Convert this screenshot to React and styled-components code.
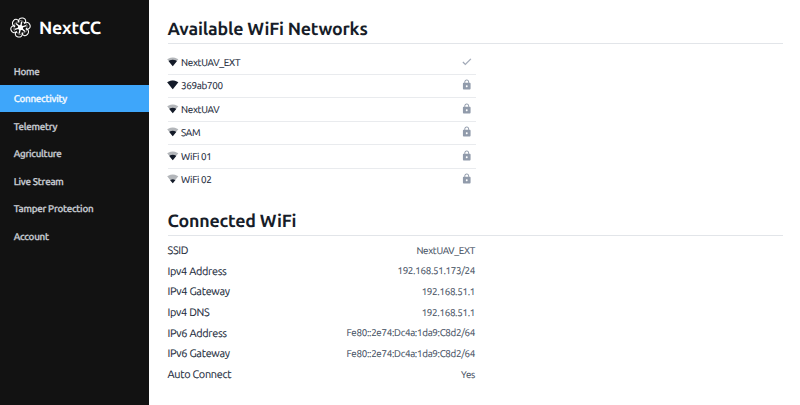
import React from 'react';
import styled, { createGlobalStyle } from 'styled-components';

const GlobalStyle = createGlobalStyle`
  * { box-sizing: border-box; }
  body {
    margin: 0;
    background: #fff;
    font-family: Ubuntu, "Noto Sans", sans-serif;
    color: #1a202c;
    text-rendering: geometricPrecision;
  }
`;

const Page = styled.div`
  display: flex;
  height: 405px;
  overflow: hidden;
`;

const Sidebar = styled.aside`
  width: 149px;
  flex: none;
  background: #121212;
`;

const Brand = styled.div`
  display: flex;
  align-items: center;
  gap: 8px;
  height: 57.3px;
  padding: 0 0 2px 10px;
  color: #fff;
  font-size: 17.8px;
  letter-spacing: -0.2px;
  font-weight: 700;
`;

const BrandName = styled.span`
  padding-top: 1px;
`;

const NavItem = styled.a`
  display: flex;
  align-items: center;
  height: 27.5px;
  padding: 0.5px 0 0 13.7px;
  font-size: 9.8px;
  letter-spacing: -0.25px;
  font-weight: 500;
  -webkit-text-stroke: 0.3px currentColor;
  color: ${(p) => (p.$active ? '#f4faff' : '#c8ccd3')};
  background: ${(p) => (p.$active ? '#3ea6fa' : 'transparent')};
`;

const Main = styled.main`
  flex: 1;
  padding: 14px 17px 0 18.5px;
`;

const Heading = styled.h2`
  height: 30px;
  margin: 0;
  border-bottom: 1px solid #e2e5e9;
  font-size: 17.8px;
  letter-spacing: -0.2px;
  line-height: 30px;
  font-weight: 700;
  color: #171d29;
`;

const NetworkList = styled.ul`
  width: 308px;
  height: 162px;
  margin: 0;
  padding: 7px 0 0;
  list-style: none;
`;

const NetworkRow = styled.li`
  display: flex;
  align-items: center;
  height: 23.5px;
  padding: 0 3.2px 0 0;
  border-bottom: 1px solid #e9ebee;
  font-size: 9.9px;
  letter-spacing: -0.3px;
  color: #202838;

  &:last-child { border-bottom-color: transparent; }
`;

const NetworkName = styled.span`
  flex: 1;
  margin-left: 2.4px;
  -webkit-text-stroke: 0.1px currentColor;
`;

const DetailList = styled.dl`
  width: 307.5px;
  margin: 0;
  padding-top: 4px;
`;

const DetailRow = styled.div`
  display: flex;
  align-items: center;
  justify-content: space-between;
  height: 20.65px;
  -webkit-text-stroke: 0.1px currentColor;
`;

const Term = styled.dt`
  padding-top: 1.4px;
  font-size: 10.9px;
  letter-spacing: -0.29px;
  color: #222b3b;
`;

const Value = styled.dd`
  margin: 0;
  font-size: 9.8px;
  letter-spacing: -0.3px;
  color: #465163;
`;

const Icon = styled.svg`
  display: block;
  flex: none;
`;

const RowIcon = styled(Icon)`
  margin-bottom: 1.4px;
`;

const SignalIcon = styled(RowIcon)`
  margin-left: -0.4px;
`;

function Logo() {
  return (
    <Icon width="21" height="21" viewBox="-12 -12 24 24" fill="none" stroke="#fff" strokeWidth="1.2">
      {[0, 60, 120, 180, 240, 300].map((a) => (
        <g key={a} transform={`rotate(${a + 12})`}>
          <path d="M-3.6-5.2C-4.6-9-2.4-11.2.6-11.2C4.2-11.2 5.4-7.6 3.4-5.2" />
          <path d="M-3.8-6.4C-2-8.6 2-8.2 3.6-5.4" strokeWidth=".5" />
          <path d="M0-2V-6.9" strokeWidth="1.6" />
        </g>
      ))}
      <circle r="3" fill="#fff" stroke="none" />
    </Icon>
  );
}

const FAN = 'M12 21.5 23.6 7C23.2 6.7 18.8 3 12 3S.8 6.7.4 7L12 21.5Z';
const LEVELS = {
  4: FAN,
  3: 'M12 21.5 20.5 10.9C20.1 10.5 16.9 8 12 8S3.9 10.5 3.5 10.9L12 21.5Z',
  2: 'M12 21.5 19.2 12.5C18.9 12.3 16.1 10 12 10S5.1 12.3 4.8 12.5L12 21.5Z',
  1: 'M12 21.5 17.3 14.9C17.1 14.7 15 13 12 13S6.9 14.7 6.7 14.9L12 21.5Z',
};

function Signal({ level }) {
  return (
    <SignalIcon width="11.5" height="11.5" viewBox="0 0 24 24" fill="#141b29">
      <path fillOpacity=".32" d={FAN} />
      <path d={LEVELS[level]} />
    </SignalIcon>
  );
}

function Check() {
  return (
    <RowIcon width="11.5" height="11.5" viewBox="0 0 24 24" fill="#98a1b0">
      <path d="M9 16.17 4.83 12l-1.42 1.41L9 19 21 7l-1.41-1.41z" stroke="#98a1b0" strokeWidth=".6" />
    </RowIcon>
  );
}

function Lock() {
  return (
    <RowIcon width="11.5" height="11.5" viewBox="0 0 24 24" fill="#919bab">
      <path d="M18 8h-1V6c0-2.76-2.24-5-5-5S7 3.24 7 6v2H6c-1.1 0-2 .9-2 2v10c0 1.1.9 2 2 2h12c1.1 0 2-.9 2-2V10c0-1.1-.9-2-2-2zm-6 9c-1.1 0-2-.9-2-2s.9-2 2-2 2 .9 2 2-.9 2-2 2zm3.1-9H8.9V6c0-1.71 1.39-3.1 3.1-3.1s3.1 1.39 3.1 3.1v2z" />
    </RowIcon>
  );
}

const NAV = [
  'Home',
  'Connectivity',
  'Telemetry',
  'Agriculture',
  'Live Stream',
  'Tamper Protection',
  'Account',
];

const NETWORKS = [
  { name: 'NextUAV_EXT', level: 3, connected: true },
  { name: '369ab700', level: 4 },
  { name: 'NextUAV', level: 2 },
  { name: 'SAM', level: 2 },
  { name: 'WiFi 01', level: 2 },
  { name: 'WiFi 02', level: 1 },
];

const DETAILS = [
  ['SSID', 'NextUAV_EXT'],
  ['Ipv4 Address', '192.168.51.173/24'],
  ['IPv4 Gateway', '192.168.51.1'],
  ['Ipv4 DNS', '192.168.51.1'],
  ['IPv6 Address', 'Fe80::2e74:Dc4a:1da9:C8d2/64'],
  ['IPv6 Gateway', 'Fe80::2e74:Dc4a:1da9:C8d2/64'],
  ['Auto Connect', 'Yes'],
];

export default function App() {
  return (
    <Page>
      <GlobalStyle />
      <Sidebar>
        <Brand><Logo /><BrandName>NextCC</BrandName></Brand>
        <nav>
          {NAV.map((label) => (
            <NavItem key={label} $active={label === 'Connectivity'}>{label}</NavItem>
          ))}
        </nav>
      </Sidebar>
      <Main>
        <Heading>Available WiFi Networks</Heading>
        <NetworkList>
          {NETWORKS.map((n) => (
            <NetworkRow key={n.name}>
              <Signal level={n.level} />
              <NetworkName>{n.name}</NetworkName>
              {n.connected ? <Check /> : <Lock />}
            </NetworkRow>
          ))}
        </NetworkList>
        <Heading>Connected WiFi</Heading>
        <DetailList>
          {DETAILS.map(([term, value]) => (
            <DetailRow key={term}>
              <Term>{term}</Term>
              <Value>{value}</Value>
            </DetailRow>
          ))}
        </DetailList>
      </Main>
    </Page>
  );
}
